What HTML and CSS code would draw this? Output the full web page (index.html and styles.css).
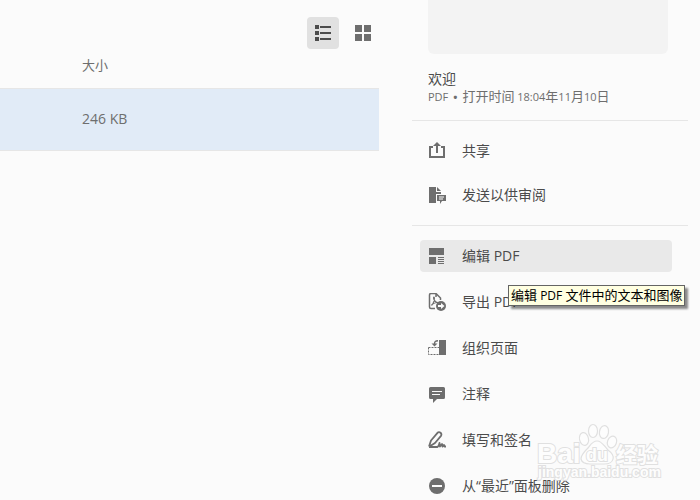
FILE: index.html
```
<!DOCTYPE html>
<html lang="zh-CN">
<head>
<meta charset="utf-8">
<title>最近</title>
<link rel="stylesheet" href="styles.css">
</head>
<body>
<div class="page">
  <main class="files">
    <div class="toolbar">
      <button class="view active" type="button" aria-label="列表视图">
        <svg width="18" height="18" viewBox="0 0 18 18" fill="#4b4b4b"><path d="M1 1h4v4H1zM1 7h4v4H1zM1 13h4v4H1zM6 2h11v2H6zM6 8h11v2H6zM6 14h11v2H6z"/></svg>
      </button>
      <button class="view" type="button" aria-label="缩略图视图">
        <svg width="18" height="18" viewBox="0 0 18 18" fill="#6e6e6e"><path d="M1 1h7v7H1zM10 1h7v7h-7zM1 10h7v7H1zM10 10h7v7h-7z"/></svg>
      </button>
    </div>
    <table class="list">
      <thead><tr><th scope="col">大小</th></tr></thead>
      <tbody><tr><td>246 KB</td></tr></tbody>
    </table>
  </main>

  <aside class="panel">
    <div class="preview"></div>
    <header class="info">
      <h1>欢迎</h1>
      <p>PDF<b>•</b><span>打开时间</span> 18:04<span>年</span>11<span>月</span>10<span>日</span></p>
    </header>
    <div class="group share">
      <button class="item" type="button">
        <svg viewBox="0 0 18 18"><path d="M5 5H2v10h14V5h-3M9 11V3" fill="none" stroke="#6e6e6e" stroke-width="2"/><path d="M9 0l4 4H5z"/></svg>
        共享
      </button>
      <button class="item" type="button">
        <svg viewBox="0 0 18 18"><path d="M1 1h7v5h5v2H8v9H1zM9 1l4 4H9z"/><path d="M9 9h9v6h-4l-2 3v-3H9z"/><path d="M11 11h5M11 13h4" stroke="#fbfbfb"/></svg>
        发送以供审阅
      </button>
    </div>
    <div class="group">
      <div class="anchor">
        <button class="item hover" type="button" aria-describedby="tip">
          <svg viewBox="0 0 18 18"><path d="M1 1h15v7H1zM1 10h7v7H1zM10 10h6v1h-6zM10 12h6v1h-6zM10 14h6v1h-6zM10 16h6v1h-6z"/></svg>
          编辑 PDF
        </button>
        <div class="tooltip" id="tip" role="tooltip"><span>编辑</span> PDF <span>文件中的文本和图像</span></div>
      </div>
      <button class="item" type="button">
        <svg viewBox="0 0 18 18"><path d="M7 15.500H3Q1.500 15.500 1.500 14V2Q1.500 .5 3 .5h5l4.500 4.500v2M8 .5V4" fill="none" stroke="#6e6e6e" stroke-width="1.500"/><path d="M3.500 12.500C5 11 7 7 6.300 4.500c-.6-.8-1 0-.5 1.500C6.500 8 8 9.500 10 9.500M3.500 12q2-2.200 5-2.500" fill="none" stroke="#6e6e6e" stroke-width="1.200"/><circle cx="13" cy="13" r="5"/><path d="M10 12h3v-2l3.500 3-3.500 3v-2h-3z" fill="#fbfbfb"/></svg>
        导出 PDF
      </button>
      <button class="item" type="button">
        <svg viewBox="0 0 18 18"><path d="M11 1h7v15h-7z"/><path d="M.5 8.500H11M.5 8.500v7H11" fill="none" stroke="#6e6e6e" stroke-dasharray="2 1"/><path d="M10 1.700C7 1.700 6.500 2.500 6.500 5" fill="none" stroke="#6e6e6e" stroke-width="1.500"/><path d="M3.500 4.500h6L6.500 7.500z"/></svg>
        组织页面
      </button>
      <button class="item" type="button">
        <svg viewBox="0 0 18 18"><path d="M2.500 2h13Q17 2 17 3.500v9q0 1.500-1.500 1.500H9l-4 4v-4H2.500Q1 14 1 12.500v-9Q1 2 2.500 2z"/><path d="M4 6.500h10M4 9.500h8" stroke="#fbfbfb"/></svg>
        注释
      </button>
      <button class="item" type="button">
        <svg viewBox="0 0 18 18"><path d="M1 15.500L3 9.500 9.500 1.800q1.500-1.300 3 0t.5 3L7 12 1.500 15.500M1 16h8.500q1.500-1 2-4l.5 3.500 2-2.500 .5 2.500 1.500-1.500 .5 1.500H18" fill="none" stroke="#6e6e6e" stroke-width="1.800" stroke-linejoin="round"/></svg>
        填写和签名
      </button>
      <button class="item" type="button">
        <svg viewBox="0 0 18 18"><circle cx="9" cy="9" r="8"/><path d="M4 8h10v2H4z" fill="#fbfbfb"/></svg>
        从“最近”面板删除
      </button>
    </div>
  </aside>
</div>

<svg class="watermark" width="128" height="62" viewBox="0 0 128 62" role="img" aria-label="Baidu 经验">
  <g fill="#fefefe" stroke="#dedede" stroke-width="1.200">
    <ellipse cx="48" cy="19" rx="4.500" ry="6.500" transform="rotate(-12 48 19)"/>
    <ellipse cx="57" cy="11" rx="4.500" ry="6.500"/>
    <ellipse cx="68" cy="12" rx="4.500" ry="6.500" transform="rotate(10 68 12)"/>
    <ellipse cx="76" cy="22" rx="4.500" ry="6" transform="rotate(20 76 22)"/>
    <path d="M61 21c5 0 7 5 11 9 4 3 6 6 5 9-1 5-6 5-9 5H54c-5 0-8-1-9-5 0-4 3-7 6-10s5-8 10-8z"/>
    <text class="brand" x="1" y="43">Bai</text>
    <text class="du" x="50" y="41">du</text>
    <text class="cjk" x="80" y="42">经验</text>
    <text class="url" x="2" y="57">jingyan.baidu.com</text>
  </g>
</svg>
</body>
</html>
```
FILE: styles.css
```
* {
  box-sizing: border-box;
}

body {
  margin: 0;
  height: 100vh;
  overflow: hidden;
  background: #fbfbfb;
  color: #4b4b4b;
  font: 14px/20px "Open Sans", "Noto Sans CJK SC", sans-serif;
}

button {
  border: 0;
  padding: 0;
  background: none;
  color: inherit;
  font: inherit;
}

.page {
  display: grid;
  grid-template-columns: 1fr 276px;
  gap: 33px;
  padding-right: 12px;
}

.toolbar {
  display: flex;
  justify-content: flex-end;
  gap: 8px;
  padding-top: 17px;
}

.view {
  display: grid;
  place-items: center;
  width: 32px;
  height: 32px;
  border-radius: 4px;
}

.view.active {
  background: #e1e1e1;
}

.list {
  width: 100%;
  margin-top: 6px;
  border-collapse: separate;
  border-spacing: 0;
  color: #6e6e6e;
}

.list th {
  height: 33px;
  padding: 0 0 13px 82px;
  text-align: left;
  font-size: 13px;
  font-weight: 400;
}

.list td {
  height: 63px;
  padding: 0 0 2px 82px;
  border: solid #e6e6e6;
  border-width: 1px 0;
  background: #e1ebf7;
}

.preview {
  height: 54px;
  margin: 0 20px 0 16px;
  border-radius: 0 0 6px 6px;
  background: #f3f3f3;
}

.info {
  padding: 15px 16px 16px;
}

.info h1 {
  margin: 0;
  font-size: 14px;
  font-weight: 400;
  line-height: 20px;
}

.info p {
  margin: 0;
  color: #6e6e6e;
  font-size: 11px;
  line-height: 15px;
  white-space: nowrap;
}

.info b {
  margin: 0 5px;
  font-weight: 700;
}

.info span,
.tooltip span {
  font-size: 13px;
}

.group {
  display: flex;
  flex-direction: column;
  gap: 14px;
  padding: 14px 16px 14px 8px;
  border-top: 1px solid #e6e6e6;
}

.group.share {
  gap: 12px;
}

.item {
  display: flex;
  align-items: center;
  gap: 16px;
  width: 100%;
  height: 32px;
  padding: 0 8px;
  border-radius: 4px;
  white-space: nowrap;
}

.item.hover {
  background: #e9e9e9;
}

.item svg {
  flex: none;
  width: 18px;
  height: 18px;
  fill: #6e6e6e;
}

.anchor {
  position: relative;
}

.tooltip {
  position: absolute;
  top: 45px;
  left: 88px;
  z-index: 1;
  padding: 0 2px;
  border: 1px solid #646464;
  background: #ffffe1;
  box-shadow: 3px 3px 2px rgba(0, 0, 0, .45);
  color: #000;
  font-size: 12px;
  line-height: 19px;
  white-space: nowrap;
}

.watermark {
  position: absolute;
  right: 36px;
  bottom: 18px;
  opacity: .9;
  pointer-events: none;
}

.watermark text {
  font-family: "Liberation Sans", sans-serif;
  font-weight: 700;
  paint-order: stroke;
  stroke-width: 2px;
}

.watermark .brand {
  font-size: 28px;
}

.watermark .du {
  font-size: 18px;
}

.watermark .cjk {
  font-family: "Noto Sans CJK SC", sans-serif;
  font-size: 21px;
}

.watermark .url {
  font-size: 14px;
}
```
